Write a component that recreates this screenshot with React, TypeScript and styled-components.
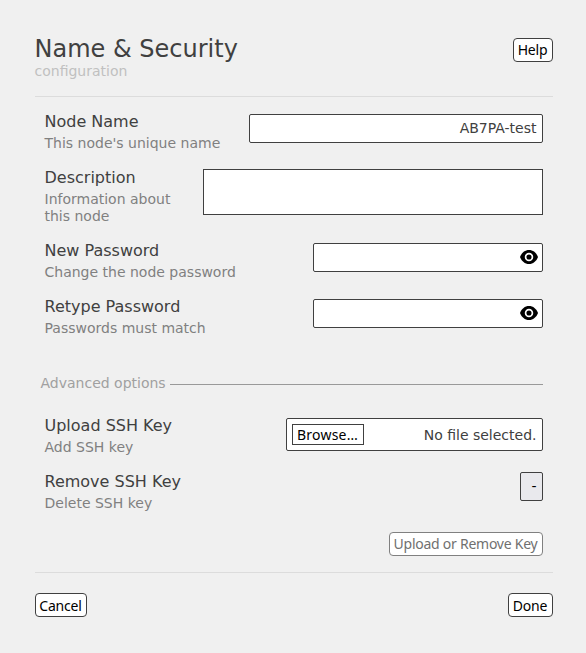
import React from "react";
import styled, { createGlobalStyle } from "styled-components";

const GlobalStyle = createGlobalStyle`
  * { box-sizing: border-box; }
  body { margin: 0; background: #f0f0f0; color: #404040; font-family: "DejaVu Sans", sans-serif; }
`;

const Dialog = styled.main`
  width: 586px;
  height: 653px;
  padding: 34px 33px 0 35px;
  background: #f0f0f0;
`;

const Header = styled.header`
  display: flex;
  justify-content: space-between;
  align-items: flex-start;
  height: 63px;
  border-bottom: 1px solid #dcdcdc;
`;

const Heading = styled.div`
  margin-left: -0.5px;
`;

const Title = styled.h1`
  margin: 0;
  padding-top: 1px;
  font-size: 24px;
  line-height: 28px;
  font-weight: 400;
`;

const Subtitle = styled.div`
  font-size: 14px;
  line-height: 17px;
  color: #c0c0c0;
`;

const Button = styled.button<{ $width: number; $top?: number; $drop?: number; $spacing?: number }>`
  display: flex;
  align-items: center;
  justify-content: center;
  width: ${(p) => p.$width}px;
  height: 24px;
  margin: ${(p) => p.$top ?? 0}px 0 0;
  padding: ${(p) => p.$drop ?? 0}px 1px 0 0;
  border: 1px solid #404040;
  border-radius: 4px;
  background: #fff;
  color: #000;
  font: 14px/18px "Noto Sans", sans-serif;
  letter-spacing: ${(p) => p.$spacing ?? -0.2}px;
  white-space: nowrap;
  &:disabled { color: #707070; border-color: #808080; }
`;

const Options = styled.section<{ $top: number }>`
  display: flex;
  flex-direction: column;
  gap: 16px;
  padding: ${(p) => p.$top}px 10px 0 9.5px;
`;

const Row = styled.div`
  display: flex;
  justify-content: space-between;
  align-items: flex-start;
`;

const Labels = styled.div<{ $width?: number }>`
  width: ${(p) => (p.$width ? `${p.$width}px` : "auto")};
`;

const Label = styled.div`
  font-size: 16px;
  line-height: 19px;
  margin-bottom: 4px;
`;

const Hint = styled.div`
  font-size: 14px;
  line-height: 17px;
  color: #808080;
`;

const Field = styled.div<{ $width: number }>`
  display: flex;
  align-items: center;
  width: ${(p) => p.$width}px;
  height: 29px;
  margin-top: 2px;
  border: 1px solid #404040;
  border-radius: 2px;
  background: #fff;
`;

const TextInput = styled.input`
  flex: 1;
  min-width: 0;
  height: 27px;
  padding: 0 5.5px 2px 6px;
  border: 0;
  outline: 0;
  background: transparent;
  color: #404040;
  font: 14px "DejaVu Sans", sans-serif;
  text-align: right;
`;

const DescriptionInput = styled.textarea`
  display: block;
  width: 340px;
  height: 46px;
  margin-top: 1px;
  border: 1px solid #404040;
  border-radius: 0;
  background: #fff;
  resize: none;
`;

const EyeIcon = styled.svg`
  flex: none;
  width: 20px;
  height: 20px;
  margin: 0 3px 1px 0;
`;

const Divider = styled.div`
  display: flex;
  align-items: center;
  gap: 4px;
  height: 17px;
  margin: 38px 10px 0 5.5px;
  font-size: 14px;
  line-height: 17px;
  color: #a0a0a0;
  &::after {
    content: "";
    flex: 1;
    height: 1px;
    margin-top: 2px;
    background: #999;
  }
`;

const FileField = styled(Field)`
  height: 33px;
  justify-content: space-between;
  padding: 0 5.5px 0 5px;
  font-size: 14px;
`;

const BrowseButton = styled(Button)`
  height: 21px;
  border-radius: 0;
`;

const KeySelect = styled.button`
  width: 23px;
  height: 29px;
  padding: 0 5.5px 2px 0;
  border: 1px solid #404040;
  border-radius: 2px;
  background: #e9e9ed;
  color: #000;
  font: 14px "DejaVu Sans", sans-serif;
  text-align: right;
`;

const Actions = styled.div`
  display: flex;
  justify-content: flex-end;
  padding-right: 10px;
  margin-top: 20px;
`;

const Footer = styled.footer`
  display: flex;
  justify-content: space-between;
  margin-top: 16px;
  padding-top: 20px;
  border-top: 1px solid #dcdcdc;
`;

interface OptionProps {
  label: string;
  hint: string;
  hintWidth?: number;
  children: React.ReactNode;
}

function Option({ label, hint, hintWidth, children }: OptionProps) {
  return (
    <Row>
      <Labels $width={hintWidth}>
        <Label>{label}</Label>
        <Hint>{hint}</Hint>
      </Labels>
      {children}
    </Row>
  );
}

function PasswordField({ label }: { label: string }) {
  return (
    <Field $width={230}>
      <TextInput type="password" aria-label={label} />
      <EyeIcon viewBox="0 0 20 20" aria-hidden="true">
        <path d="M1 10C2.600 5.700 5.900 3 10 3s7.400 2.700 9 7c-1.600 4.300-4.900 7-9 7s-7.400-2.700-9-7Z" />
        <circle cx="10" cy="10" r="3.400" fill="#000" stroke="#fff" strokeWidth="1.700" />
      </EyeIcon>
    </Field>
  );
}

export default function App() {
  return (
    <>
      <GlobalStyle />
      <Dialog>
        <Header>
          <Heading>
            <Title>Name &amp; Security</Title>
            <Subtitle>configuration</Subtitle>
          </Heading>
          <Button $width={40} $top={4} $spacing={-0.25}>Help</Button>
        </Header>
        <Options $top={15}>
          <Option label="Node Name" hint="This node's unique name">
            <Field $width={294}>
              <TextInput defaultValue="AB7PA-test" aria-label="Node Name" />
            </Field>
          </Option>
          <Option label="Description" hint="Information about this node" hintWidth={145}>
            <DescriptionInput aria-label="Description" />
          </Option>
          <Option label="New Password" hint="Change the node password">
            <PasswordField label="New Password" />
          </Option>
          <Option label="Retype Password" hint="Passwords must match">
            <PasswordField label="Retype Password" />
          </Option>
        </Options>
        <Divider>Advanced options</Divider>
        <Options $top={24}>
          <Option label="Upload SSH Key" hint="Add SSH key">
            <FileField $width={257}>
              <BrowseButton $width={72} $spacing={0.2}>Browse…</BrowseButton>
              <span>No file selected.</span>
            </FileField>
          </Option>
          <Option label="Remove SSH Key" hint="Delete SSH key">
            <KeySelect>-</KeySelect>
          </Option>
        </Options>
        <Actions>
          <Button $width={154} $spacing={-0.25} disabled>Upload or Remove Key</Button>
        </Actions>
        <Footer>
          <Button $width={52} $drop={2}>Cancel</Button>
          <Button $width={45} $drop={2}>Done</Button>
        </Footer>
      </Dialog>
    </>
  );
}
